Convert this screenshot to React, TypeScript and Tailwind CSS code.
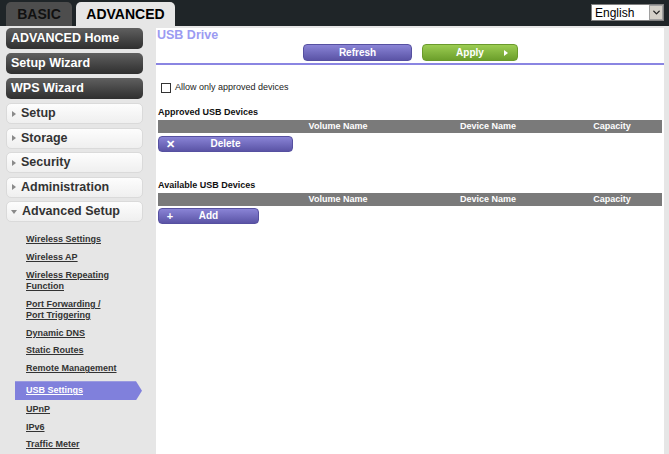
import { ChevronDown } from 'lucide-react';

const darkItems = ['ADVANCED Home', 'Setup Wizard', 'WPS Wizard'];
const groups = ['Setup', 'Storage', 'Security', 'Administration'];

type SubItem = { lines: string[]; active?: boolean };

const subItems: SubItem[] = [
  { lines: ['Wireless Settings'] },
  { lines: ['Wireless AP'] },
  { lines: ['Wireless Repeating', 'Function'] },
  { lines: ['Port Forwarding /', 'Port Triggering'] },
  { lines: ['Dynamic DNS'] },
  { lines: ['Static Routes'] },
  { lines: ['Remote Management'] },
  { lines: ['USB Settings'], active: true },
  { lines: ['UPnP'] },
  { lines: ['IPv6'] },
  { lines: ['Traffic Meter'] },
];

function TableHead() {
  return (
    <div className="grid grid-cols-[104px_152px_148px_1fr] h-[13px] bg-[#7a7a7a] text-white text-[9px] font-bold leading-[13px]">
      <span />
      <span className="text-center">Volume Name</span>
      <span className="text-center">Device Name</span>
      <span className="text-center">Capacity</span>
    </div>
  );
}

function PurpleButton({ icon, label, width }: { icon: string; label: string; width: string }) {
  return (
    <button
      className={`grid grid-cols-[20px_1fr_20px] items-center h-[16px] ${width} rounded-[4px] bg-gradient-to-b from-[#8a84d6] to-[#5b54a6] border border-[#5650a0] text-white text-[10px] font-bold leading-none`}
    >
      <span className="text-center text-[11px] pl-[2px]">{icon}</span>
      <span className="text-center">{label}</span>
      <span />
    </button>
  );
}

export default function App() {
  return (
    <div className="w-[669px] h-[454px] overflow-hidden bg-[#e6e6e6] font-['Liberation_Sans',Arial,sans-serif]">
      {/* top bar with tabs */}
      <div className="h-[26px] bg-[#1f2528] flex items-end relative">
        <div className="ml-[6px] w-[66px] h-[24px] rounded-t-[5px] bg-[#4d4d4d] text-[#111] text-[14px] font-bold flex items-center justify-center">
          BASIC
        </div>
        <div className="ml-[4px] w-[99px] h-[24px] rounded-t-[5px] bg-[#e6e6e6] text-black text-[14px] font-bold flex items-center justify-center">
          ADVANCED
        </div>
        <div className="absolute left-[591px] top-[4px] w-[73px] h-[17px] bg-white border border-[#7f7f7f] flex items-center">
          <span className="flex-1 pl-[3px] text-[12px] leading-none text-black">English</span>
          <span className="w-[14px] h-[15px] bg-[#d4d0c8] border border-[#a0a0a0] flex items-center justify-center">
            <ChevronDown size={11} strokeWidth={3} className="text-[#222]" />
          </span>
        </div>
      </div>

      <div className="flex h-[428px]">
        {/* sidebar */}
        <div className="w-[156px] shrink-0 pt-[2px]">
          <div className="px-[6px] w-[149px]">
            {darkItems.map((t) => (
              <div
                key={t}
                className="h-[21px] mb-[4px] rounded-[5px] bg-gradient-to-b from-[#606060] to-[#2f2f2f] text-white text-[12.5px] font-bold leading-[21px] pl-[5px]"
              >
                {t}
              </div>
            ))}
            {groups.map((t) => (
              <div
                key={t}
                className="h-[21px] mb-[3.5px] rounded-[5px] bg-gradient-to-b from-[#fdfdfd] to-[#efefef] border border-[#dadada] text-[#333] text-[12.5px] font-bold flex items-center"
              >
                <span className="ml-[5px] w-0 h-0 border-y-[3px] border-y-transparent border-l-[4px] border-l-[#8a8a8a]" />
                <span className="ml-[5px]">{t}</span>
              </div>
            ))}
            <div className="h-[21px] rounded-[5px] bg-gradient-to-b from-[#fdfdfd] to-[#efefef] border border-[#dadada] text-[#333] text-[12.5px] font-bold flex items-center">
              <span className="ml-[4px] w-0 h-0 border-x-[3px] border-x-transparent border-t-[4px] border-t-[#8a8a8a]" />
              <span className="ml-[5px]">Advanced Setup</span>
            </div>
          </div>

          <div className="pt-[12px] flex flex-col">
            {subItems.map((s) =>
              s.active ? (
                <div
                  key={s.lines[0]}
                  className="ml-[15px] w-[127px] h-[19px] mt-[6.9px] mb-[-3.5px] bg-[#8080dc] text-white text-[9px] font-bold underline leading-[19px] pl-[11px] [clip-path:polygon(0_0,calc(100%-6px)_0,100%_50%,calc(100%-6px)_100%,0_100%)]"
                >
                  {s.lines[0]}
                </div>
              ) : (
                <div
                  key={s.lines[0]}
                  className="pl-[26px] mt-[6.9px] first:mt-0 text-[#333] text-[9px] font-bold underline leading-[11px]"
                >
                  {s.lines.map((l) => (
                    <div key={l}>{l}</div>
                  ))}
                </div>
              ),
            )}
          </div>
        </div>

        {/* main panel */}
        <div className="w-[508px] mt-[2px] bg-white px-[2px]">
          <div className="-ml-[1px] text-[12.5px] font-bold text-[#9b9bf2] leading-[14px]">USB Drive</div>
          <div className="mt-[2px] ml-[145px] flex gap-[10px]">
            <button className="w-[109px] h-[17px] rounded-[4px] bg-gradient-to-b from-[#8a84d6] to-[#5b54a6] border border-[#5650a0] text-white text-[10px] font-bold leading-none">
              Refresh
            </button>
            <button className="relative w-[96px] h-[17px] rounded-[4px] bg-gradient-to-b from-[#9ccd52] to-[#6c9f2b] border border-[#6a9a2c] text-white text-[10px] font-bold leading-none">
              Apply
              <span className="absolute right-[9px] top-[5px] w-0 h-0 border-y-[3px] border-y-transparent border-l-[4px] border-l-white" />
            </button>
          </div>
          <div className="mt-[2px] -mx-[2px] h-[2px] bg-[#8a85e2]" />

          <div className="mt-[17px] h-[12px] flex items-center">
            <span className="ml-[3px] w-[10px] h-[10px] border border-[#333] bg-white" />
            <span className="ml-[4px] text-[9px] text-[#222]">Allow only approved devices</span>
          </div>

          <div className="mt-[12.5px] text-[9px] font-bold text-[#111] leading-[11px]">Approved USB Devices</div>
          <div className="mt-[2.5px]">
            <TableHead />
          </div>
          <div className="mt-[3px]">
            <PurpleButton icon="✕" label="Delete" width="w-[135px]" />
          </div>

          <div className="mt-[27.5px] text-[9px] font-bold text-[#111] leading-[11px]">Available USB Devices</div>
          <div className="mt-[2.5px]">
            <TableHead />
          </div>
          <div className="mt-[2px]">
            <PurpleButton icon="+" label="Add" width="w-[101px]" />
          </div>
        </div>
      </div>
    </div>
  );
}
